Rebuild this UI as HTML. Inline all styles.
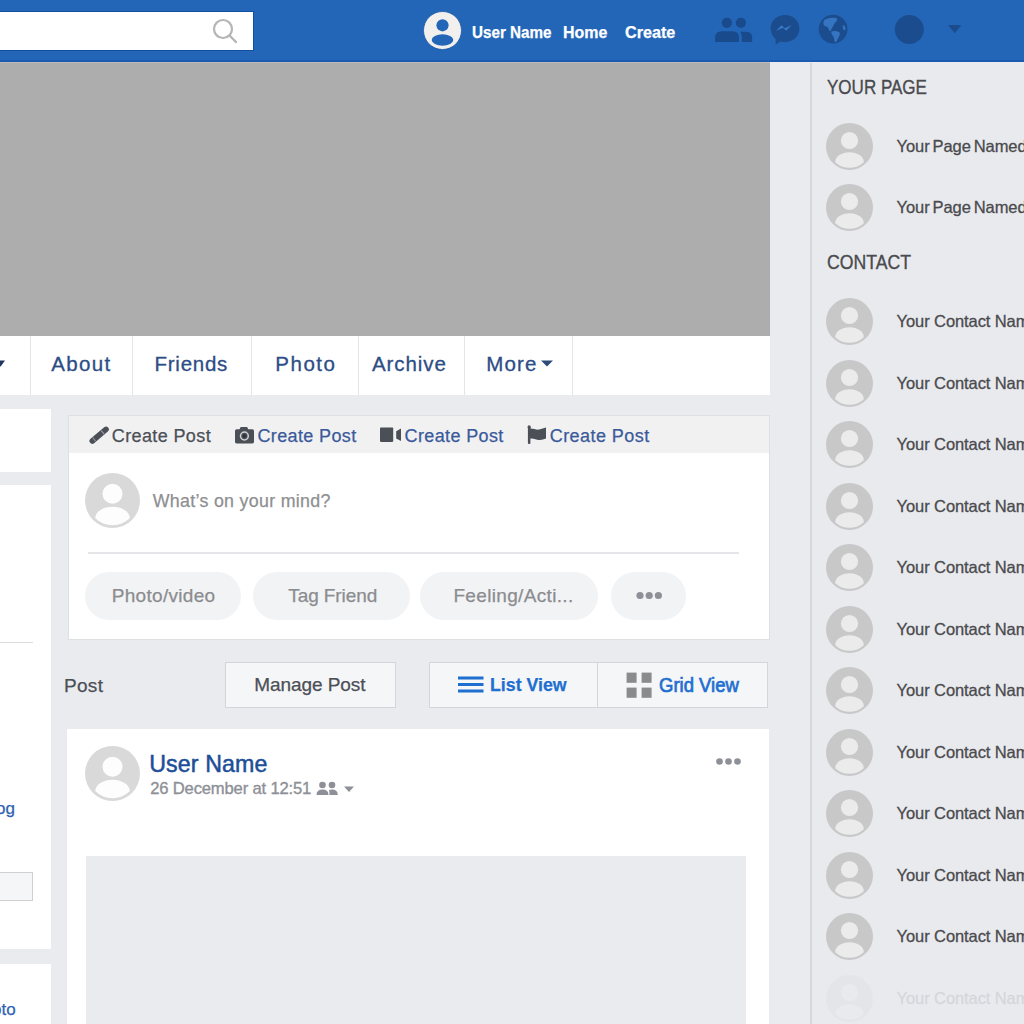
<!DOCTYPE html>
<html><head><meta charset="utf-8">
<style>
*{margin:0;padding:0;box-sizing:border-box}
html,body{width:1024px;height:1024px;overflow:hidden;background:#e9ebee;font-family:"Liberation Sans",sans-serif;position:relative}
.a{position:absolute}
.t{position:absolute;white-space:nowrap;line-height:1;-webkit-text-stroke-width:0.25px}
#hdr{left:0;top:0;width:1024px;height:62px;background:#2366b7;border-bottom:2px solid #1a5ab0}
#search{left:0;top:12px;width:253px;height:38px;background:#fff;box-shadow:0 0 0 1px #134f9f}
.hl{color:#fff;font-weight:bold;font-size:16.5px}
#cover{left:0;top:62px;width:770px;height:274px;background:#adadad;border-top:1px solid #bdbab8}
#nav{left:0;top:336px;width:770px;height:59px;background:#fff}
.div{position:absolute;top:336px;width:1px;height:59px;background:#e3e4e7}
.tab{color:#2c4d85;font-size:20.5px;-webkit-text-stroke:0.3px #2c4d85}
.wbox{background:#fff}
#cp{left:68px;top:415px;width:702px;height:225px;background:#fff;border:1px solid #dddfe2}
#cphead{left:69px;top:416px;width:700px;height:37px;background:#f1f1f2}
.cpt{font-size:18px;color:#3b5a9a}
.pill{position:absolute;top:572px;height:48px;border-radius:24px;background:#f2f3f5}
.pt{font-size:19px;color:#8b8c8f}
#sidebar{left:810px;top:63px;width:214px;height:961px;background:#e9eaee;border-left:2px solid #d6d7db}
.sh{font-size:19.5px;color:#4a4b4e;-webkit-text-stroke:0.35px #4a4b4e}
.st{font-size:16.5px;color:#4a4b4e;letter-spacing:-0.09px;-webkit-text-stroke:0.3px #4a4b4e}
</style></head><body>
<div class="a" id="hdr"></div>
<div class="a" id="search"></div>
<svg class="a" style="left:205px;top:12px" width="40" height="38" viewBox="0 0 40 38">
<circle cx="18" cy="17" r="9" fill="none" stroke="#b5b5b5" stroke-width="2.2"/>
<line x1="24.5" y1="23.5" x2="31" y2="30" stroke="#b5b5b5" stroke-width="2.4" stroke-linecap="round"/>
</svg>
<svg class="a" style="left:423px;top:11px" width="40" height="40" viewBox="0 0 40 40">
<circle cx="19.5" cy="19.5" r="19" fill="#f2f0ee" stroke="#1b56a2" stroke-width="0.8"/>
<circle cx="19.5" cy="14.3" r="6.1" fill="#2366b7"/>
<ellipse cx="19.5" cy="29" rx="10.8" ry="5.7" fill="#2366b7"/>
</svg>
<div class="t hl" style="left:471.6px;top:23.6px;transform-origin:0 0;transform:scaleX(0.923)">User Name</div>
<div class="t hl" style="left:562.7px;top:23.6px;transform-origin:0 0;transform:scaleX(0.966)">Home</div>
<div class="t hl" style="left:625.3px;top:23.6px;transform-origin:0 0;transform:scaleX(0.98)">Create</div>
<!-- friends icon -->
<svg class="a" style="left:712px;top:14px" width="44" height="32" viewBox="0 0 44 32">
<circle cx="14.9" cy="8.8" r="5.1" fill="#194a8b"/>
<circle cx="28.9" cy="8.8" r="5.1" fill="#194a8b"/>
<path d="M3.1 28 V23.5 Q3.1 17.3 10 17.3 H20.5 Q27 17.3 27 23.5 V28 Z" fill="#194a8b"/>
<path d="M28.3 17.8 H34 Q40.2 17.8 40.2 24 V28 H29.8 V23.5 Q29.8 19.8 28.3 17.8 Z" fill="#194a8b"/>
</svg>
<!-- messenger -->
<svg class="a" style="left:768px;top:13px" width="34" height="34" viewBox="0 0 34 34">
<path d="M17 2 C8.8 2 2.6 8 2.6 15.6 C2.6 19.8 4.5 23.4 7.6 25.9 L7.6 31.5 L12.6 28.6 C14 29 15.5 29.2 17 29.2 C25.2 29.2 31.4 23.2 31.4 15.6 C31.4 8 25.2 2 17 2 Z" fill="#1b4d8e"/>
<path d="M8 18 L13.5 12.3 L16.8 15.3 L23.8 12 L18.2 17.8 L15 14.8 Z" fill="#3b78c2"/>
</svg>
<!-- globe -->
<svg class="a" style="left:817px;top:14px" width="32" height="32" viewBox="0 0 32 32">
<circle cx="16.1" cy="15.1" r="14.4" fill="#1b4d8e"/>
<path d="M7 6.5 C9 4.5 13 3.5 17 3.8 C19 4 20.5 4.5 20.2 6 C19.5 8 17.5 8.5 17 10.5 C16.5 12.5 15 13 14.5 15 C14 16.5 13.2 17.5 12.5 17 C11.5 16 12 14 10.5 13 C9 12 7.5 12.5 6.8 11 C6.3 9.5 6.2 8 7 6.5 Z" fill="#3474c0"/>
<path d="M14.5 17.5 C16.5 16.5 20 16.8 22 18 C23.3 19 23 21 22 22.5 C21 24 20.5 26 19.5 27.5 C18.8 28.5 17.8 28.3 17.5 27 C17.2 25 17 23.5 16 22 C15 20.5 13.8 19 14.5 17.5 Z" fill="#3474c0"/>
<path d="M26 11 C27.5 11.5 28.5 13 28.5 15 C28.3 16.3 27 16.5 26.3 15.5 C25.8 14 25.6 12 26 11 Z" fill="#3474c0"/>
</svg>
<svg class="a" style="left:894px;top:14px" width="31" height="31" viewBox="0 0 31 31"><circle cx="15.3" cy="15.4" r="14.5" fill="#1b4d8e"/></svg>
<svg class="a" style="left:948px;top:25px" width="14" height="9" viewBox="0 0 14 9"><path d="M0 0 L13.5 0 L6.75 8.3 Z" fill="#1b4d8e"/></svg>

<div class="a" id="cover"></div>
<div class="a" id="nav"></div>
<div class="div" style="left:30px"></div>
<div class="div" style="left:132px"></div>
<div class="div" style="left:251px"></div>
<div class="div" style="left:358px"></div>
<div class="div" style="left:464px"></div>
<div class="div" style="left:572px"></div>
<svg class="a" style="left:0px;top:360px" width="8" height="8" viewBox="0 0 8 8"><path d="M-4 0.5 L5 0.5 L0.5 6.8 Z" fill="#22355f"/></svg>
<div class="t tab" style="left:51.2px;top:354.2px;letter-spacing:1.38px">About</div>
<div class="t tab" style="left:154.5px;top:354.2px;letter-spacing:0.75px">Friends</div>
<div class="t tab" style="left:275.3px;top:354.2px;letter-spacing:1.53px">Photo</div>
<div class="t tab" style="left:371.9px;top:354.2px;letter-spacing:0.95px">Archive</div>
<div class="t tab" style="left:486.3px;top:354.2px;letter-spacing:1.13px">More</div>
<svg class="a" style="left:541px;top:360px" width="13" height="8" viewBox="0 0 13 8"><path d="M0 0.5 L12 0.5 L6 6.5 Z" fill="#2e4b7b"/></svg>

<!-- left column -->
<div class="a wbox" style="left:0;top:409px;width:51px;height:63px"></div>
<div class="a wbox" style="left:0;top:485px;width:51px;height:464px"></div>
<div class="a" style="left:0;top:642px;width:33px;height:1px;background:#dcdde0"></div>
<div class="t" style="left:-4px;top:800px;font-size:17px;color:#2f62b3">og</div>
<div class="a" style="left:-2px;top:872px;width:35px;height:29px;background:#f5f6f7;border:1px solid #cfd0d3"></div>
<div class="a wbox" style="left:0;top:964px;width:51px;height:60px"></div>
<div class="t" style="left:-8px;top:1001px;font-size:17px;color:#2f62b3">oto</div>

<!-- create post -->
<div class="a" id="cp"></div>
<div class="a" id="cphead"></div>
<svg class="a" style="left:88px;top:424px" width="22" height="22" viewBox="0 0 22 22">
<line x1="4.3" y1="17" x2="18" y2="5.4" stroke="#4b4f56" stroke-width="5.6" stroke-linecap="round"/>
<line x1="13.2" y1="6.6" x2="16.6" y2="10.6" stroke="#9a9ca0" stroke-width="1.2"/>
<line x1="4.6" y1="13.4" x2="7.6" y2="17.2" stroke="#8a8c90" stroke-width="1.3"/>
</svg>
<div class="t cpt" style="left:111.8px;top:426.5px;color:#4b4f56;letter-spacing:0.38px">Create Post</div>
<svg class="a" style="left:234px;top:426px" width="21" height="18" viewBox="0 0 21 18">
<rect x="1" y="3.2" width="19" height="14.2" rx="1.6" fill="#4b4f56"/>
<path d="M5.3 4 L6.6 0.9 H13.2 L14.4 4 Z" fill="#4b4f56"/>
<circle cx="10.4" cy="10" r="3.9" fill="none" stroke="#cfd0d2" stroke-width="1.5"/>
<circle cx="10.4" cy="10" r="1.8" fill="#2f3236"/>
</svg>
<div class="t cpt" style="left:257.4px;top:426.5px;letter-spacing:0.38px">Create Post</div>
<svg class="a" style="left:379px;top:427px" width="23" height="16" viewBox="0 0 23 16">
<rect x="1" y="0.5" width="13.2" height="14.4" rx="0.8" fill="#4b4f56"/>
<path d="M17.2 4.3 L22 1.6 V14 L17.2 11.6 Z" fill="#4b4f56"/>
</svg>
<div class="t cpt" style="left:404.6px;top:426.5px;letter-spacing:0.36px">Create Post</div>
<svg class="a" style="left:526px;top:425px" width="22" height="20" viewBox="0 0 22 20">
<rect x="1.9" y="1.2" width="2.5" height="17.8" rx="1" fill="#4b4f56"/>
<circle cx="3.15" cy="1.9" r="1.6" fill="#4b4f56"/>
<path d="M4 3.6 C8 3.4 10 5.2 13 4.6 C16 4 17.5 3 20 2.6 V13.6 C17.5 14.2 16 15.2 13 15 C10 14.8 8 13.2 4 13.6 Z" fill="#4b4f56"/>
</svg>
<div class="t cpt" style="left:549.7px;top:426.5px;letter-spacing:0.45px">Create Post</div>

<svg class="a" style="left:85px;top:473px" width="55" height="55" viewBox="0 0 55 55">
<defs><clipPath id="c1"><circle cx="27.5" cy="27.5" r="24.8"/></clipPath></defs>
<circle cx="27.5" cy="27.5" r="27.5" fill="#d9d9d9"/>
<circle cx="27.5" cy="20.7" r="10" fill="#fdfdfd"/>
<path d="M10.3 45.37 A17.2 11.67 0 0 1 44.7 45.37 A24.8 24.8 0 0 1 10.3 45.37 Z" fill="#fdfdfd"/>
</svg>
<div class="t" style="left:152.7px;top:493.2px;font-size:17.8px;letter-spacing:0.32px;color:#8e8f92">What’s on your mind?</div>
<div class="a" style="left:88px;top:552px;width:651px;height:2px;background:#e5e6e9"></div>
<div class="pill" style="left:85px;width:156px"></div>
<div class="pill" style="left:253px;width:157px"></div>
<div class="pill" style="left:420px;width:178px"></div>
<div class="pill" style="left:611px;width:75px"></div>
<div class="t pt" style="left:111.7px;top:585.6px;letter-spacing:0.31px">Photo/video</div>
<div class="t pt" style="left:288.3px;top:585.6px;letter-spacing:-0.09px">Tag Friend</div>
<div class="t pt" style="left:453.4px;top:585.6px;letter-spacing:0.34px">Feeling/Acti...</div>
<svg class="a" style="left:636px;top:591px" width="27" height="9" viewBox="0 0 27 9"><circle cx="4" cy="4.5" r="3.6" fill="#8d9096"/><circle cx="13.2" cy="4.5" r="3.6" fill="#8d9096"/><circle cx="22.4" cy="4.5" r="3.6" fill="#8d9096"/></svg>

<!-- post controls -->
<div class="t" style="left:63.9px;top:675.6px;font-size:19px;letter-spacing:0.37px;color:#4b4f56">Post</div>
<div class="a" style="left:225px;top:662px;width:171px;height:46px;background:#f5f6f7;border:1px solid #d3d5d9"></div>
<div class="t" style="left:254.3px;top:674.6px;font-size:19px;letter-spacing:-0.07px;color:#4b4f56">Manage Post</div>
<div class="a" style="left:429px;top:662px;width:339px;height:46px;background:#f5f6f7;border:1px solid #d3d5d9"></div>
<div class="a" style="left:597px;top:662px;width:1px;height:46px;background:#d3d5d9"></div>
<svg class="a" style="left:458px;top:676px" width="26" height="17" viewBox="0 0 26 17"><rect x="0" y="0.5" width="25.5" height="3" fill="#1f6fd1"/><rect x="0" y="7" width="25.5" height="3" fill="#1f6fd1"/><rect x="0" y="13.5" width="25.5" height="3" fill="#1f6fd1"/></svg>
<div class="t" style="left:489.5px;top:674.9px;font-size:19px;transform-origin:0 0;transform:scaleX(0.934);font-weight:bold;color:#1f6fd1">List View</div>
<svg class="a" style="left:626px;top:672px" width="27" height="27" viewBox="0 0 27 27"><rect x="0.6" y="0.6" width="10" height="10.2" fill="#8a8b8d"/><rect x="15.6" y="0.6" width="10" height="10.2" fill="#8a8b8d"/><rect x="0.6" y="15.6" width="10" height="10.2" fill="#8a8b8d"/><rect x="15.6" y="15.6" width="10" height="10.2" fill="#8a8b8d"/></svg>
<div class="t" style="left:658.9px;top:676.3px;font-size:19.5px;transform-origin:0 0;transform:scaleX(0.949);color:#1f6fd1;-webkit-text-stroke-width:0.7px">Grid View</div>

<!-- post card -->
<div class="a" style="left:67px;top:729px;width:702px;height:300px;background:#fff"></div>
<svg class="a" style="left:85px;top:746px" width="55" height="55" viewBox="0 0 55 55">
<defs><clipPath id="c2"><circle cx="27.5" cy="27.5" r="24.8"/></clipPath></defs>
<circle cx="27.5" cy="27.5" r="27.5" fill="#d9d9d9"/>
<circle cx="27.5" cy="20.7" r="10" fill="#fdfdfd"/>
<path d="M10.3 45.37 A17.2 11.67 0 0 1 44.7 45.37 A24.8 24.8 0 0 1 10.3 45.37 Z" fill="#fdfdfd"/>
</svg>
<div class="t" style="left:149.2px;top:752.6px;font-size:23.2px;letter-spacing:0.12px;color:#1d4e98;-webkit-text-stroke-width:0.5px">User Name</div>
<div class="t" style="left:150.2px;top:781.3px;font-size:16.6px;letter-spacing:-0.16px;color:#8d9096;-webkit-text-stroke-width:0.35px">26 December at 12:51</div>
<svg class="a" style="left:316px;top:781px" width="23" height="15" viewBox="0 0 23 15">
<circle cx="6.5" cy="4" r="3.3" fill="#8d9096"/><circle cx="16" cy="4" r="3.3" fill="#8d9096"/>
<path d="M0.5 14 Q0.5 8.5 6.5 8.5 Q12.5 8.5 12.5 14 Z" fill="#8d9096"/><path d="M13 9 Q14.5 8.5 16 8.5 Q21.8 8.5 21.8 14 H13.5 Q13.5 10.5 13 9Z" fill="#8d9096"/>
</svg>
<svg class="a" style="left:344px;top:786px" width="11" height="7" viewBox="0 0 11 7"><path d="M0 0.5 L10 0.5 L5 6 Z" fill="#8d9096"/></svg>
<svg class="a" style="left:715px;top:757px" width="28" height="9" viewBox="0 0 28 9"><circle cx="4.5" cy="4.5" r="3.3" fill="#8d9096"/><circle cx="13.5" cy="4.5" r="3.3" fill="#8d9096"/><circle cx="22.5" cy="4.5" r="3.3" fill="#8d9096"/></svg>
<div class="a" style="left:86px;top:856px;width:660px;height:170px;background:#e9ebee"></div>

<!-- sidebar -->
<div class="a" id="sidebar"></div>
<div class="t sh" style="left:826.9px;top:77.5px;transform-origin:0 0;transform:scaleX(0.873)">YOUR PAGE</div>
<div class="t sh" style="left:826.7px;top:253.2px;transform-origin:0 0;transform:scaleX(0.905)">CONTACT</div>
<div id="rows">
<svg class="a" style="left:825.5px;top:123.1px;opacity:1.0" width="47" height="47" viewBox="0 0 47 47"><circle cx="23.5" cy="23.5" r="23.5" fill="#c8c8c8"/><circle cx="23.5" cy="17.5" r="8.6" fill="#ebebeb"/><path d="M9.2 39.15 A14.3 9.95 0 0 1 37.8 39.15 A21.2 21.2 0 0 1 9.2 39.15 Z" fill="#ebebeb"/></svg>
<div class="t st" style="left:896.6px;top:138.0px;opacity:1.0;word-spacing:-1.5px">Your Page Named</div>
<svg class="a" style="left:825.5px;top:183.6px;opacity:1.0" width="47" height="47" viewBox="0 0 47 47"><circle cx="23.5" cy="23.5" r="23.5" fill="#c8c8c8"/><circle cx="23.5" cy="17.5" r="8.6" fill="#ebebeb"/><path d="M9.2 39.15 A14.3 9.95 0 0 1 37.8 39.15 A21.2 21.2 0 0 1 9.2 39.15 Z" fill="#ebebeb"/></svg>
<div class="t st" style="left:896.6px;top:198.5px;opacity:1.0;word-spacing:-1.5px">Your Page Named</div>
<svg class="a" style="left:825.5px;top:298.1px;opacity:1.0" width="47" height="47" viewBox="0 0 47 47"><circle cx="23.5" cy="23.5" r="23.5" fill="#c8c8c8"/><circle cx="23.5" cy="17.5" r="8.6" fill="#ebebeb"/><path d="M9.2 39.15 A14.3 9.95 0 0 1 37.8 39.15 A21.2 21.2 0 0 1 9.2 39.15 Z" fill="#ebebeb"/></svg>
<div class="t st" style="left:896.6px;top:313.0px;opacity:1.0;word-spacing:0px">Your Contact Name</div>
<svg class="a" style="left:825.5px;top:359.6px;opacity:1.0" width="47" height="47" viewBox="0 0 47 47"><circle cx="23.5" cy="23.5" r="23.5" fill="#c8c8c8"/><circle cx="23.5" cy="17.5" r="8.6" fill="#ebebeb"/><path d="M9.2 39.15 A14.3 9.95 0 0 1 37.8 39.15 A21.2 21.2 0 0 1 9.2 39.15 Z" fill="#ebebeb"/></svg>
<div class="t st" style="left:896.6px;top:374.5px;opacity:1.0;word-spacing:0px">Your Contact Name</div>
<svg class="a" style="left:825.5px;top:421.1px;opacity:1.0" width="47" height="47" viewBox="0 0 47 47"><circle cx="23.5" cy="23.5" r="23.5" fill="#c8c8c8"/><circle cx="23.5" cy="17.5" r="8.6" fill="#ebebeb"/><path d="M9.2 39.15 A14.3 9.95 0 0 1 37.8 39.15 A21.2 21.2 0 0 1 9.2 39.15 Z" fill="#ebebeb"/></svg>
<div class="t st" style="left:896.6px;top:436.0px;opacity:1.0;word-spacing:0px">Your Contact Name</div>
<svg class="a" style="left:825.5px;top:482.6px;opacity:1.0" width="47" height="47" viewBox="0 0 47 47"><circle cx="23.5" cy="23.5" r="23.5" fill="#c8c8c8"/><circle cx="23.5" cy="17.5" r="8.6" fill="#ebebeb"/><path d="M9.2 39.15 A14.3 9.95 0 0 1 37.8 39.15 A21.2 21.2 0 0 1 9.2 39.15 Z" fill="#ebebeb"/></svg>
<div class="t st" style="left:896.6px;top:497.5px;opacity:1.0;word-spacing:0px">Your Contact Name</div>
<svg class="a" style="left:825.5px;top:544.1px;opacity:1.0" width="47" height="47" viewBox="0 0 47 47"><circle cx="23.5" cy="23.5" r="23.5" fill="#c8c8c8"/><circle cx="23.5" cy="17.5" r="8.6" fill="#ebebeb"/><path d="M9.2 39.15 A14.3 9.95 0 0 1 37.8 39.15 A21.2 21.2 0 0 1 9.2 39.15 Z" fill="#ebebeb"/></svg>
<div class="t st" style="left:896.6px;top:559.0px;opacity:1.0;word-spacing:0px">Your Contact Name</div>
<svg class="a" style="left:825.5px;top:605.6px;opacity:1.0" width="47" height="47" viewBox="0 0 47 47"><circle cx="23.5" cy="23.5" r="23.5" fill="#c8c8c8"/><circle cx="23.5" cy="17.5" r="8.6" fill="#ebebeb"/><path d="M9.2 39.15 A14.3 9.95 0 0 1 37.8 39.15 A21.2 21.2 0 0 1 9.2 39.15 Z" fill="#ebebeb"/></svg>
<div class="t st" style="left:896.6px;top:620.5px;opacity:1.0;word-spacing:0px">Your Contact Name</div>
<svg class="a" style="left:825.5px;top:667.1px;opacity:1.0" width="47" height="47" viewBox="0 0 47 47"><circle cx="23.5" cy="23.5" r="23.5" fill="#c8c8c8"/><circle cx="23.5" cy="17.5" r="8.6" fill="#ebebeb"/><path d="M9.2 39.15 A14.3 9.95 0 0 1 37.8 39.15 A21.2 21.2 0 0 1 9.2 39.15 Z" fill="#ebebeb"/></svg>
<div class="t st" style="left:896.6px;top:682.0px;opacity:1.0;word-spacing:0px">Your Contact Name</div>
<svg class="a" style="left:825.5px;top:728.6px;opacity:1.0" width="47" height="47" viewBox="0 0 47 47"><circle cx="23.5" cy="23.5" r="23.5" fill="#c8c8c8"/><circle cx="23.5" cy="17.5" r="8.6" fill="#ebebeb"/><path d="M9.2 39.15 A14.3 9.95 0 0 1 37.8 39.15 A21.2 21.2 0 0 1 9.2 39.15 Z" fill="#ebebeb"/></svg>
<div class="t st" style="left:896.6px;top:743.5px;opacity:1.0;word-spacing:0px">Your Contact Name</div>
<svg class="a" style="left:825.5px;top:790.1px;opacity:1.0" width="47" height="47" viewBox="0 0 47 47"><circle cx="23.5" cy="23.5" r="23.5" fill="#c8c8c8"/><circle cx="23.5" cy="17.5" r="8.6" fill="#ebebeb"/><path d="M9.2 39.15 A14.3 9.95 0 0 1 37.8 39.15 A21.2 21.2 0 0 1 9.2 39.15 Z" fill="#ebebeb"/></svg>
<div class="t st" style="left:896.6px;top:805.0px;opacity:1.0;word-spacing:0px">Your Contact Name</div>
<svg class="a" style="left:825.5px;top:851.6px;opacity:1.0" width="47" height="47" viewBox="0 0 47 47"><circle cx="23.5" cy="23.5" r="23.5" fill="#c8c8c8"/><circle cx="23.5" cy="17.5" r="8.6" fill="#ebebeb"/><path d="M9.2 39.15 A14.3 9.95 0 0 1 37.8 39.15 A21.2 21.2 0 0 1 9.2 39.15 Z" fill="#ebebeb"/></svg>
<div class="t st" style="left:896.6px;top:866.5px;opacity:1.0;word-spacing:0px">Your Contact Name</div>
<svg class="a" style="left:825.5px;top:913.1px;opacity:1.0" width="47" height="47" viewBox="0 0 47 47"><circle cx="23.5" cy="23.5" r="23.5" fill="#c8c8c8"/><circle cx="23.5" cy="17.5" r="8.6" fill="#ebebeb"/><path d="M9.2 39.15 A14.3 9.95 0 0 1 37.8 39.15 A21.2 21.2 0 0 1 9.2 39.15 Z" fill="#ebebeb"/></svg>
<div class="t st" style="left:896.6px;top:928.0px;opacity:1.0;word-spacing:0px">Your Contact Name</div>
<svg class="a" style="left:825.5px;top:974.6px;opacity:0.12" width="47" height="47" viewBox="0 0 47 47"><circle cx="23.5" cy="23.5" r="23.5" fill="#c8c8c8"/><circle cx="23.5" cy="17.5" r="8.6" fill="#ebebeb"/><path d="M9.2 39.15 A14.3 9.95 0 0 1 37.8 39.15 A21.2 21.2 0 0 1 9.2 39.15 Z" fill="#ebebeb"/></svg>
<div class="t st" style="left:896.6px;top:989.5px;opacity:0.12;word-spacing:0px">Your Contact Name</div>
</div>
</body></html>
